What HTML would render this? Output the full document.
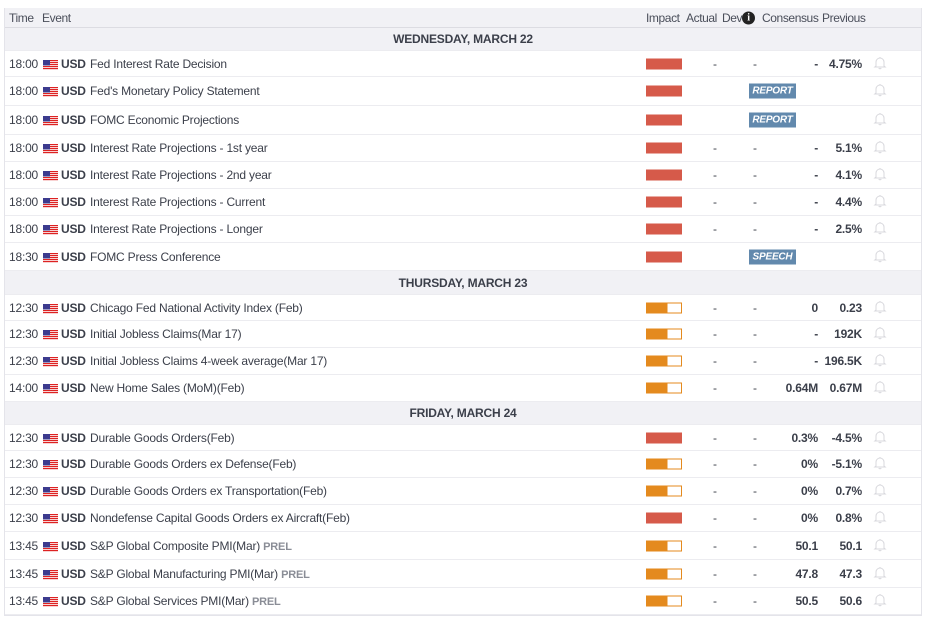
<!DOCTYPE html>
<html><head><meta charset="utf-8"><style>
body{margin:0;background:#fff;font-family:"Liberation Sans",Arial,sans-serif;font-size:12px;color:#3b3f4a;letter-spacing:-0.2px}
#t{position:absolute;left:4px;top:8px;width:916px;border:1px solid #e4e4ea;border-top:none;background:#fff}
.r{position:relative;border-bottom:1px solid #ececf0;background:#fff}
.h{height:19px;background:#f1f1f5;color:#4a4e5a;border-bottom:1px solid #dcdce2}
.d{background:#f1f1f5;font-weight:bold;text-align:center;color:#3b3f4a}
.r span{position:absolute;top:50%;transform:translateY(-50%);white-space:nowrap}
.tm{left:4px}.fl{left:38px;width:15px;height:10px}
.cu{left:56px;font-weight:bold}.ev{left:85px}
.imp{left:641px;width:36px;height:11px;box-sizing:border-box}
.hi{background:#d65a4a}.md{background:linear-gradient(90deg,#e48a1e 0,#e48a1e 60%,#fff 60%);border:1px solid #e48a1e}
.a{left:708px}.dv{left:748px}
.c{right:103px;font-weight:bold}.p{right:59px;font-weight:bold}
.b{left:868px}
.tag{left:744px;background:#6289ad;color:#fff;font-style:italic;font-weight:bold;font-size:10px;padding:2px 0;width:47px;text-align:center}
.pr{color:#8a8d96;font-weight:bold;font-size:11px}
.h span{letter-spacing:-0.4px}
</style></head><body>
<div id="t">
<div class="r h"><span class="tm">Time</span><span style="left:37px">Event</span><span style="left:641px">Impact</span><span style="left:681px">Actual</span><span style="left:717px">Dev</span><span style="left:737px;width:13px;height:13px;border-radius:50%;background:#222;color:#fff;font-weight:bold;font-size:10px;text-align:center;line-height:13px;font-family:'Liberation Serif',serif">i</span><span style="left:757px">Consensus</span><span style="left:817px">Previous</span></div>
<div id="rows"></div>
</div>
<script>
const F='<span class="fl"><svg width="15" height="10"><rect width="15" height="10" fill="#fff"/><g fill="#d22">'+[0,2,4,6,8].map(y=>`<rect y="${y}" width="15" height="1.2"/>`).join('')+'</g><rect width="7" height="5.5" fill="#3c3b8e"/></svg></span>';
const B='<span class="b"><svg width="14" height="14" viewBox="0 0 14 14" fill="none" stroke="#d8d8dd" stroke-width="1"><path d="M3 10.5V6.5a4 4 0 0 1 8 0v4l1.2 1H1.8z"/><path d="M5.8 12.5a1.3 1.3 0 0 0 2.4 0"/><path d="M7 1.5v1"/></svg></span>';
const R=[
['d','WEDNESDAY, MARCH 22',23],
['18:00','Fed Interest Rate Decision','hi','-','-','-','4.75%',26],
['18:00',"Fed's Monetary Policy Statement",'hi','R','REPORT','','',29],
['18:00','FOMC Economic Projections','hi','R','REPORT','','',29],
['18:00','Interest Rate Projections - 1st year','hi','-','-','-','5.1%',27],
['18:00','Interest Rate Projections - 2nd year','hi','-','-','-','4.1%',27],
['18:00','Interest Rate Projections - Current','hi','-','-','-','4.4%',27],
['18:00','Interest Rate Projections - Longer','hi','-','-','-','2.5%',27],
['18:30','FOMC Press Conference','hi','R','SPEECH','','',28],
['d','THURSDAY, MARCH 23',24],
['12:30','Chicago Fed National Activity Index (Feb)','md','-','-','0','0.23',26],
['12:30','Initial Jobless Claims(Mar 17)','md','-','-','-','192K',27],
['12:30','Initial Jobless Claims 4-week average(Mar 17)','md','-','-','-','196.5K',27],
['14:00','New Home Sales (MoM)(Feb)','md','-','-','0.64M','0.67M',27],
['d','FRIDAY, MARCH 24',23],
['12:30','Durable Goods Orders(Feb)','hi','-','-','0.3%','-4.5%',26],
['12:30','Durable Goods Orders ex Defense(Feb)','md','-','-','0%','-5.1%',27],
['12:30','Durable Goods Orders ex Transportation(Feb)','md','-','-','0%','0.7%',27],
['12:30','Nondefense Capital Goods Orders ex Aircraft(Feb)','hi','-','-','0%','0.8%',27],
['13:45','S&amp;P Global Composite PMI(Mar) <b class="pr">PREL</b>','md','-','-','50.1','50.1',28],
['13:45','S&amp;P Global Manufacturing PMI(Mar) <b class="pr">PREL</b>','md','-','-','47.8','47.3',28],
['13:45','S&amp;P Global Services PMI(Mar) <b class="pr">PREL</b>','md','-','-','50.5','50.6',27]];
let h='';
for(const r of R){
 if(r[0]=='d'){h+=`<div class="r d" style="height:${r[2]-1}px"><span style="left:0;right:0">${r[1]}</span></div>`;continue;}
 h+=`<div class="r" style="height:${r[7]-1}px"><span class="tm">${r[0]}</span>${F}<span class="cu">USD</span><span class="ev">${r[1]}</span><span class="imp ${r[2]}"></span>`;
 if(r[3]=='R')h+=`<span class="tag">${r[4]}</span>`;
 else h+=`<span class="a">-</span><span class="dv">-</span><span class="c">${r[5]}</span><span class="p">${r[6]}</span>`;
 h+=B+'</div>';
}
document.getElementById('rows').innerHTML=h;
</script>
</body></html>
